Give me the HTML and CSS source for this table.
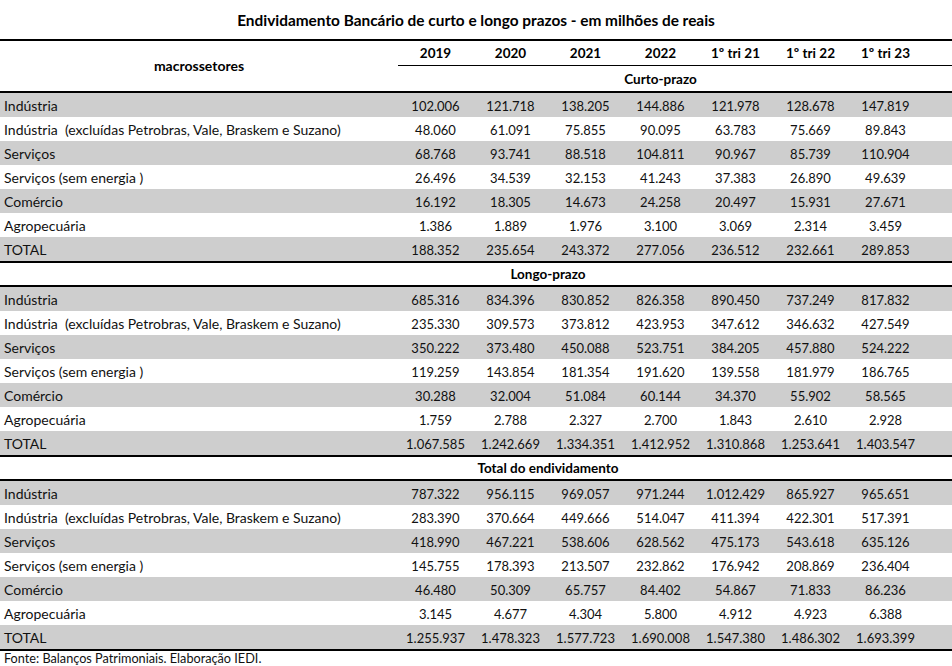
FILE: index.html
```html
<!DOCTYPE html>
<html lang="pt-BR">
<head>
<meta charset="utf-8">
<title>Endividamento Bancário</title>
<link rel="stylesheet" href="styles.css">
</head>
<body>
<div class="title">Endividamento Bancário de curto e longo prazos - em milhões de reais</div>
<table class="debt">
  <colgroup>
    <col class="c-label"><col class="c-num"><col class="c-num"><col class="c-num"><col class="c-num"><col class="c-num"><col class="c-num"><col class="c-num"><col class="c-pad">
  </colgroup>
  <thead>
    <tr class="years">
      <th class="label-head" rowspan="2">macrossetores</th>
      <th class="yr">2019</th><th class="yr">2020</th><th class="yr">2021</th><th class="yr">2022</th><th class="yr">1º tri 21</th><th class="yr">1º tri 22</th><th class="yr">1º tri 23</th><th class="yr"></th>
    </tr>
    <tr class="section first">
      <th colspan="7">Curto-prazo</th><th></th>
    </tr>
  </thead>
  <tbody>
    <tr class="g"><td>Indústria</td><td>102.006</td><td>121.718</td><td>138.205</td><td>144.886</td><td>121.978</td><td>128.678</td><td>147.819</td><td></td></tr>
    <tr><td>Indústria &nbsp;(excluídas Petrobras, Vale, Braskem e Suzano)</td><td>48.060</td><td>61.091</td><td>75.855</td><td>90.095</td><td>63.783</td><td>75.669</td><td>89.843</td><td></td></tr>
    <tr class="g"><td>Serviços</td><td>68.768</td><td>93.741</td><td>88.518</td><td>104.811</td><td>90.967</td><td>85.739</td><td>110.904</td><td></td></tr>
    <tr><td>Serviços (sem energia )</td><td>26.496</td><td>34.539</td><td>32.153</td><td>41.243</td><td>37.383</td><td>26.890</td><td>49.639</td><td></td></tr>
    <tr class="g"><td>Comércio</td><td>16.192</td><td>18.305</td><td>14.673</td><td>24.258</td><td>20.497</td><td>15.931</td><td>27.671</td><td></td></tr>
    <tr><td>Agropecuária</td><td>1.386</td><td>1.889</td><td>1.976</td><td>3.100</td><td>3.069</td><td>2.314</td><td>3.459</td><td></td></tr>
    <tr class="g total"><td>TOTAL</td><td>188.352</td><td>235.654</td><td>243.372</td><td>277.056</td><td>236.512</td><td>232.661</td><td>289.853</td><td></td></tr>
    <tr class="section"><th colspan="9">Longo-prazo</th></tr>
    <tr class="g"><td>Indústria</td><td>685.316</td><td>834.396</td><td>830.852</td><td>826.358</td><td>890.450</td><td>737.249</td><td>817.832</td><td></td></tr>
    <tr><td>Indústria &nbsp;(excluídas Petrobras, Vale, Braskem e Suzano)</td><td>235.330</td><td>309.573</td><td>373.812</td><td>423.953</td><td>347.612</td><td>346.632</td><td>427.549</td><td></td></tr>
    <tr class="g"><td>Serviços</td><td>350.222</td><td>373.480</td><td>450.088</td><td>523.751</td><td>384.205</td><td>457.880</td><td>524.222</td><td></td></tr>
    <tr><td>Serviços (sem energia )</td><td>119.259</td><td>143.854</td><td>181.354</td><td>191.620</td><td>139.558</td><td>181.979</td><td>186.765</td><td></td></tr>
    <tr class="g"><td>Comércio</td><td>30.288</td><td>32.004</td><td>51.084</td><td>60.144</td><td>34.370</td><td>55.902</td><td>58.565</td><td></td></tr>
    <tr><td>Agropecuária</td><td>1.759</td><td>2.788</td><td>2.327</td><td>2.700</td><td>1.843</td><td>2.610</td><td>2.928</td><td></td></tr>
    <tr class="g total"><td>TOTAL</td><td>1.067.585</td><td>1.242.669</td><td>1.334.351</td><td>1.412.952</td><td>1.310.868</td><td>1.253.641</td><td>1.403.547</td><td></td></tr>
    <tr class="section"><th colspan="9">Total do endividamento</th></tr>
    <tr class="g"><td>Indústria</td><td>787.322</td><td>956.115</td><td>969.057</td><td>971.244</td><td>1.012.429</td><td>865.927</td><td>965.651</td><td></td></tr>
    <tr><td>Indústria &nbsp;(excluídas Petrobras, Vale, Braskem e Suzano)</td><td>283.390</td><td>370.664</td><td>449.666</td><td>514.047</td><td>411.394</td><td>422.301</td><td>517.391</td><td></td></tr>
    <tr class="g"><td>Serviços</td><td>418.990</td><td>467.221</td><td>538.606</td><td>628.562</td><td>475.173</td><td>543.618</td><td>635.126</td><td></td></tr>
    <tr><td>Serviços (sem energia )</td><td>145.755</td><td>178.393</td><td>213.507</td><td>232.862</td><td>176.942</td><td>208.869</td><td>236.404</td><td></td></tr>
    <tr class="g"><td>Comércio</td><td>46.480</td><td>50.309</td><td>65.757</td><td>84.402</td><td>54.867</td><td>71.833</td><td>86.236</td><td></td></tr>
    <tr><td>Agropecuária</td><td>3.145</td><td>4.677</td><td>4.304</td><td>5.800</td><td>4.912</td><td>4.923</td><td>6.388</td><td></td></tr>
    <tr class="g total"><td>TOTAL</td><td>1.255.937</td><td>1.478.323</td><td>1.577.723</td><td>1.690.008</td><td>1.547.380</td><td>1.486.302</td><td>1.693.399</td><td></td></tr>
  </tbody>
</table>
<div class="source">Fonte: Balanços Patrimoniais. Elaboração IEDI.</div>
</body>
</html>
```
FILE: styles.css
```css
html, body {
  margin: 0;
  padding: 0;
  background: #ffffff;
}
body {
  font-family: Lato, "Liberation Sans", sans-serif;
  font-size: 12px;
  color: #111111;
  width: 952px;
}
.title {
  height: 39px;
  line-height: 41px;
  text-align: center;
  font-weight: bold;
  font-size: 15.4px;
  color: #000;
}
.debt {
  width: 952px;
  table-layout: fixed;
  border-collapse: separate;
  border-spacing: 0;
  border-top: 2px solid #000;
}
.c-label { width: 398px; }
.c-num { width: 75px; }
.c-pad { width: 29px; }
.debt th, .debt td {
  padding: 0;
  line-height: 16px;
  white-space: nowrap;
  vertical-align: middle;
  text-align: center;
}
.debt td {
  font-family: "Liberation Sans Narrow", "Arial Narrow", Lato, sans-serif;
  font-size: 13px;
  color: #111;
}
.debt th {
  font-weight: bold;
  font-size: 13.5px;
  color: #000;
}
.debt td:first-child {
  font-family: Lato, "Liberation Sans", sans-serif;
  text-align: left;
  padding-left: 4px;
  font-size: 14px;
}
.debt tr { height: 24px; }
.debt tr.years { height: 25px; }
.debt tr.years .yr { border-bottom: 1px solid #000; }
.debt .label-head { border-bottom: 2px solid #000; font-size: 14px; }
.debt tr.section th { border-bottom: 2px solid #000; }
.debt tr.section.first { height: 27px; }
.debt tr.section th[colspan="9"] { padding-left: 144px; }
.debt tr.g td { background: #cecece; }
.debt tr.total { height: 26px; }
.debt tr.total td { border-bottom: 2px solid #000; }
.debt tr td { padding-top: 1px; }
.source {
  padding-left: 4px;
  font-size: 12.7px;
  line-height: 14px;
}
```
